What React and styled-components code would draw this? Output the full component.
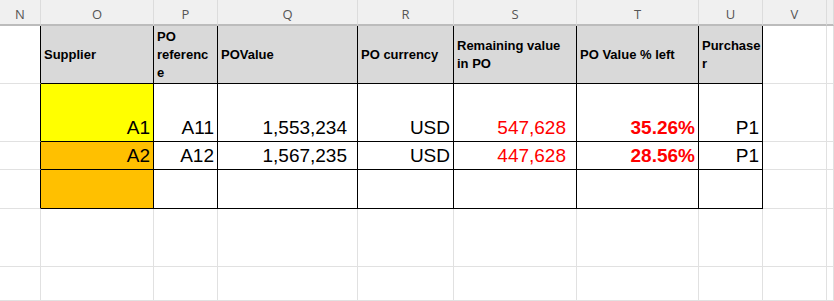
import React from "react";
import styled, { createGlobalStyle } from "styled-components";

const Global = createGlobalStyle`
  html, body { margin: 0; padding: 0; background: #ffffff; }
  body { font-family: "Liberation Sans", Arial, sans-serif; overflow: hidden; }
  #root { height: 301px; }
`;

const GRID = "#e1e1e1";
const INK = "#000000";

const Sheet = styled.div`
  display: grid;
  grid-template-columns: 41px 113px 64px 140px 96px 123px 122px 64px 64px 1fr;
  grid-template-rows: 26px 58px 58px 28px 39px 58px 1fr;
  height: 301px;
  width: 834px;
  overflow: hidden;
  background: #ffffff;
`;

const ColHead = styled.div`
  box-sizing: border-box;
  background: #f0f0f0;
  border-right: 1px solid #dcdcdc;
  border-bottom: 2px solid #bcbcbc;
  color: #555555;
  font-family: "Open Sans", "Liberation Sans", sans-serif;
  font-size: 13px;
  display: flex;
  justify-content: center;
  align-items: center;
  padding-top: 4px;
`;

const Cell = styled.div`
  box-sizing: border-box;
  min-width: 0;
  overflow: hidden;
  background: ${(p) => p.$bg || "transparent"};
  border-right: 1px solid ${(p) => p.$right || GRID};
  border-bottom: 1px solid ${(p) => p.$bottom || GRID};
  display: flex;
  align-items: flex-end;
  justify-content: flex-end;
  padding: 0 ${(p) => (p.$wide ? 10 : 3)}px 2px 3px;
  font-size: 19px;
  line-height: 22px;
  color: ${(p) => p.$color || "#000000"};
  font-weight: ${(p) => (p.$bold ? 700 : 400)};
  white-space: nowrap;
`;

const HeadCell = styled.div`
  box-sizing: border-box;
  min-width: 0;
  overflow: hidden;
  background: #d9d9d9;
  border-right: 1px solid ${INK};
  border-bottom: 1px solid ${INK};
  display: flex;
  align-items: center;
  justify-content: flex-start;
  padding: 0 3px;
  font-size: 13px;
  line-height: 18px;
  font-weight: 700;
  color: #000000;
  white-space: nowrap;
`;

const cols = ["N", "O", "P", "Q", "R", "S", "T", "U", "V", "W"];

const headers = [
  <>Supplier</>,
  <>PO<br />referenc<br />e</>,
  <>POValue</>,
  <>PO currency</>,
  <>Remaining value<br />in PO</>,
  <>PO Value % left</>,
  <>Purchase<br />r</>,
];

const rows = [
  { bg: "#ffff00", cells: ["A1", "A11", "1,553,234", "USD", "547,628", "35.26%", "P1"] },
  { bg: "#ffc000", cells: ["A2", "A12", "1,567,235", "USD", "447,628", "28.56%", "P1"] },
  { bg: "#ffc000", cells: ["", "", "", "", "", "", ""] },
];

const cellStyle = (i) => {
  if (i === 4) return { color: "#ff0000", bold: false, wide: true };
  if (i === 5) return { color: "#ff0000", bold: true, wide: false };
  if (i === 2) return { color: "#000000", bold: false, wide: true };
  return { color: "#000000", bold: false, wide: false };
};

export default function App() {
  return (
    <>
      <Global />
      <Sheet>
        {cols.map((c) => (
          <ColHead key={c}>{c === "W" ? "" : c}</ColHead>
        ))}

        <Cell $right={INK} />
        {headers.map((h, i) => (
          <HeadCell key={i}>
            <span>{h}</span>
          </HeadCell>
        ))}
        <Cell />
        <Cell />

        {rows.map((r, ri) =>
          [
            <Cell key={`n${ri}`} $right={INK} />,
            ...r.cells.map((v, i) => {
              const s = cellStyle(i);
              return (
                <Cell
                  key={`${ri}-${i}`}
                  $bg={i === 0 ? r.bg : undefined}
                  $right={INK}
                  $bottom={INK}
                  $color={s.color}
                  $bold={s.bold}
                  $wide={s.wide}
                >
                  {v}
                </Cell>
              );
            }),
            <Cell key={`v${ri}`} />,
            <Cell key={`w${ri}`} />,
          ]
        )}

        {[0, 1].map((ri) =>
          cols.map((c) => <Cell key={`e${ri}${c}`} />)
        )}
      </Sheet>
    </>
  );
}
